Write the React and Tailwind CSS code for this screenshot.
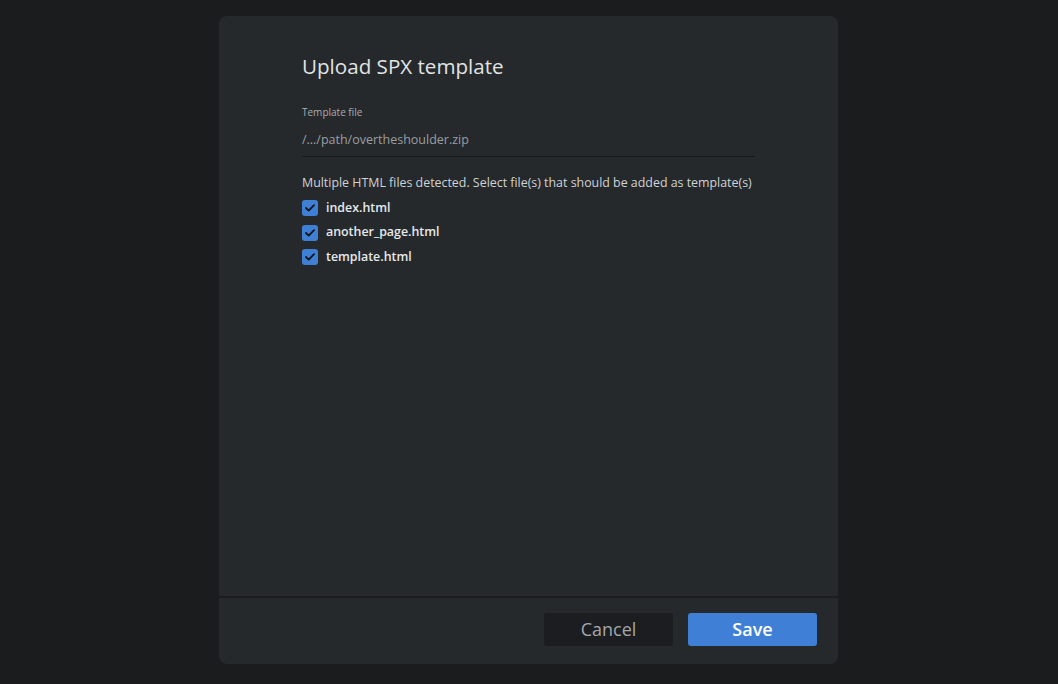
import React, { useState } from "react";

const files = ["index.html", "another_page.html", "template.html"];

const Check = ({ checked, onChange, label }) => (
  <label className="flex items-center h-[24.5px] gap-2 cursor-pointer">
    <span
      onClick={onChange}
      className={`flex items-center justify-center w-4 h-4 rounded-[3px] ${
        checked ? "bg-[#3f7fd5]" : "border border-gray-500"
      }`}
    >
      {checked && (
        <svg width="10" height="8" viewBox="0 0 10 8" fill="none">
          <path
            d="M1 4l2.7 2.6L9 1.2"
            stroke="#111418"
            strokeWidth="1.8"
            strokeLinecap="round"
            strokeLinejoin="round"
          />
        </svg>
      )}
    </span>
    <span className="text-[12.4px] font-semibold text-[#e6e8ea]">{label}</span>
  </label>
);

const App = () => {
  const [selected, setSelected] = useState(files);

  const toggle = (f) =>
    setSelected((s) => (s.includes(f) ? s.filter((x) => x !== f) : [...s, f]));

  return (
    <div
      className="w-full h-[684px] bg-[#1b1c1e] flex justify-center pt-4"
      style={{ fontFamily: '"Open Sans", "Noto Sans", sans-serif' }}
    >
      <div className="w-[619px] h-[648px] ml-[-1px] bg-[#25292c] rounded-lg flex flex-col overflow-hidden">
        <div className="flex-1 pl-[83px] pr-[83px] pt-[36px]">
          <h1 className="text-[20.6px] leading-7 text-[#e1e3e5]">Upload SPX template</h1>

          <div className="mt-[24px]">
            <div className="text-[10px] leading-4 text-[#a9adb1]">Template file</div>
            <div className="mt-[10px] pb-[6px] text-[12.5px] leading-5 text-[#9a9ea3] border-b border-[#17191b]">
              /…/path/overtheshoulder.zip
            </div>
          </div>

          <p className="mt-[16px] text-[12.4px] leading-5 whitespace-nowrap text-[#d0d3d6]">
            Multiple HTML files detected. Select file(s) that should be added as template(s)
          </p>

          <div className="flex flex-col mt-[3px]">
            {files.map((f) => (
              <Check
                key={f}
                label={f}
                checked={selected.includes(f)}
                onChange={() => toggle(f)}
              />
            ))}
          </div>
        </div>

        <div className="h-[2px] bg-[#1a1c1e]" />

        <div className="h-[66px] flex items-center justify-end gap-[15px] pr-[21px] pb-[3px]">
          <button className="w-[129px] h-[33px] rounded-[3px] bg-[#1b1d20] text-[18px] text-[#a3a7ab]">
            Cancel
          </button>
          <button className="w-[129px] h-[33px] rounded-[3px] bg-[#3f80d6] text-[18px] font-semibold text-white">
            Save
          </button>
        </div>
      </div>
    </div>
  );
};

export default App;
